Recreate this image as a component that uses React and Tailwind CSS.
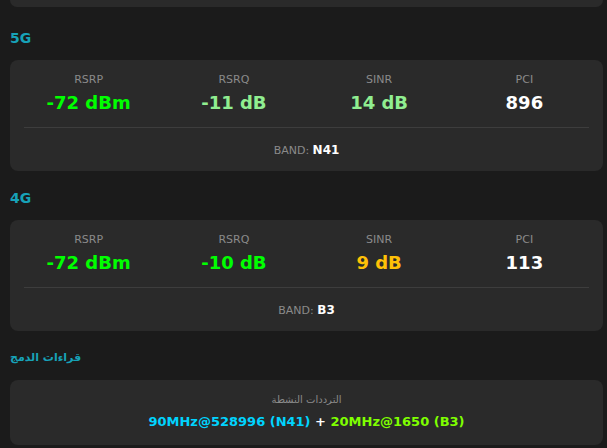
const font = { fontFamily: '"DejaVu Sans", Verdana, "Noto Sans", sans-serif' };

const networks = [
  {
    title: "5G",
    band: "N41",
    stats: [
      { label: "RSRP", value: "-72 dBm", color: "text-[#00ff00]" },
      { label: "RSRQ", value: "-11 dB", color: "text-[#90ee90]" },
      { label: "SINR", value: "14 dB", color: "text-[#90ee90]" },
      { label: "PCI", value: "896", color: "text-white" },
    ],
  },
  {
    title: "4G",
    band: "B3",
    stats: [
      { label: "RSRP", value: "-72 dBm", color: "text-[#00ff00]" },
      { label: "RSRQ", value: "-10 dB", color: "text-[#00ff00]" },
      { label: "SINR", value: "9 dB", color: "text-[#ffc107]" },
      { label: "PCI", value: "113", color: "text-white" },
    ],
  },
];

function SectionTitle({ children, first, small }) {
  return (
    <h3
      className={`${first ? "mt-[21px]" : "mt-[17px]"} mb-3 ${small ? "text-[11px]" : "text-[14px]"} font-bold leading-5 text-[#17a2b8]`}
    >
      {children}
    </h3>
  );
}

function NetworkCard({ net }) {
  return (
    <div className="rounded-lg bg-[#2a2a2a] px-[14px] pt-3 pb-3">
      <div className="grid grid-cols-4 gap-4 text-center">
        {net.stats.map((s) => (
          <div key={s.label}>
            <div className="text-[11px] leading-4 text-[#8a8a8a]">{s.label}</div>
            <div className={`mt-[3px] text-[18px] font-bold leading-6 ${s.color}`}>
              {s.value}
            </div>
          </div>
        ))}
      </div>
      <div className="mt-3 h-px bg-[#3d3d3d]" />
      <div className="mt-[14px] text-center text-[11px] leading-4 text-[#8a8a8a]">
        BAND: <span className="text-[12px] font-bold text-white">{net.band}</span>
      </div>
    </div>
  );
}

export default function App() {
  return (
    <div className="min-h-[448px] bg-[#1b1b1b] pl-[10px] pr-[4px]" style={font}>
      {/* bottom of the card above, scrolled out of view */}
      <div className="h-[7px] rounded-b-lg bg-[#2a2a2a]" />

      {networks.map((net, i) => (
        <div key={net.title}>
          <SectionTitle first={i === 0}>{net.title}</SectionTitle>
          <NetworkCard net={net} />
        </div>
      ))}

      <SectionTitle small>قراءات الدمج</SectionTitle>
      <div className="rounded-lg bg-[#2a2a2a] px-[14px] pt-3 pb-[13px] text-center">
        <div className="text-[10px] leading-4 text-[#8a8a8a]">الترددات النشطة</div>
        <div className="mt-1 text-[13px] font-bold leading-5">
          <span className="text-[#00d4ff]">90MHz@528996 (N41)</span>
          <span className="text-white"> + </span>
          <span className="text-[#7fff00]">20MHz@1650 (B3)</span>
        </div>
      </div>
    </div>
  );
}
